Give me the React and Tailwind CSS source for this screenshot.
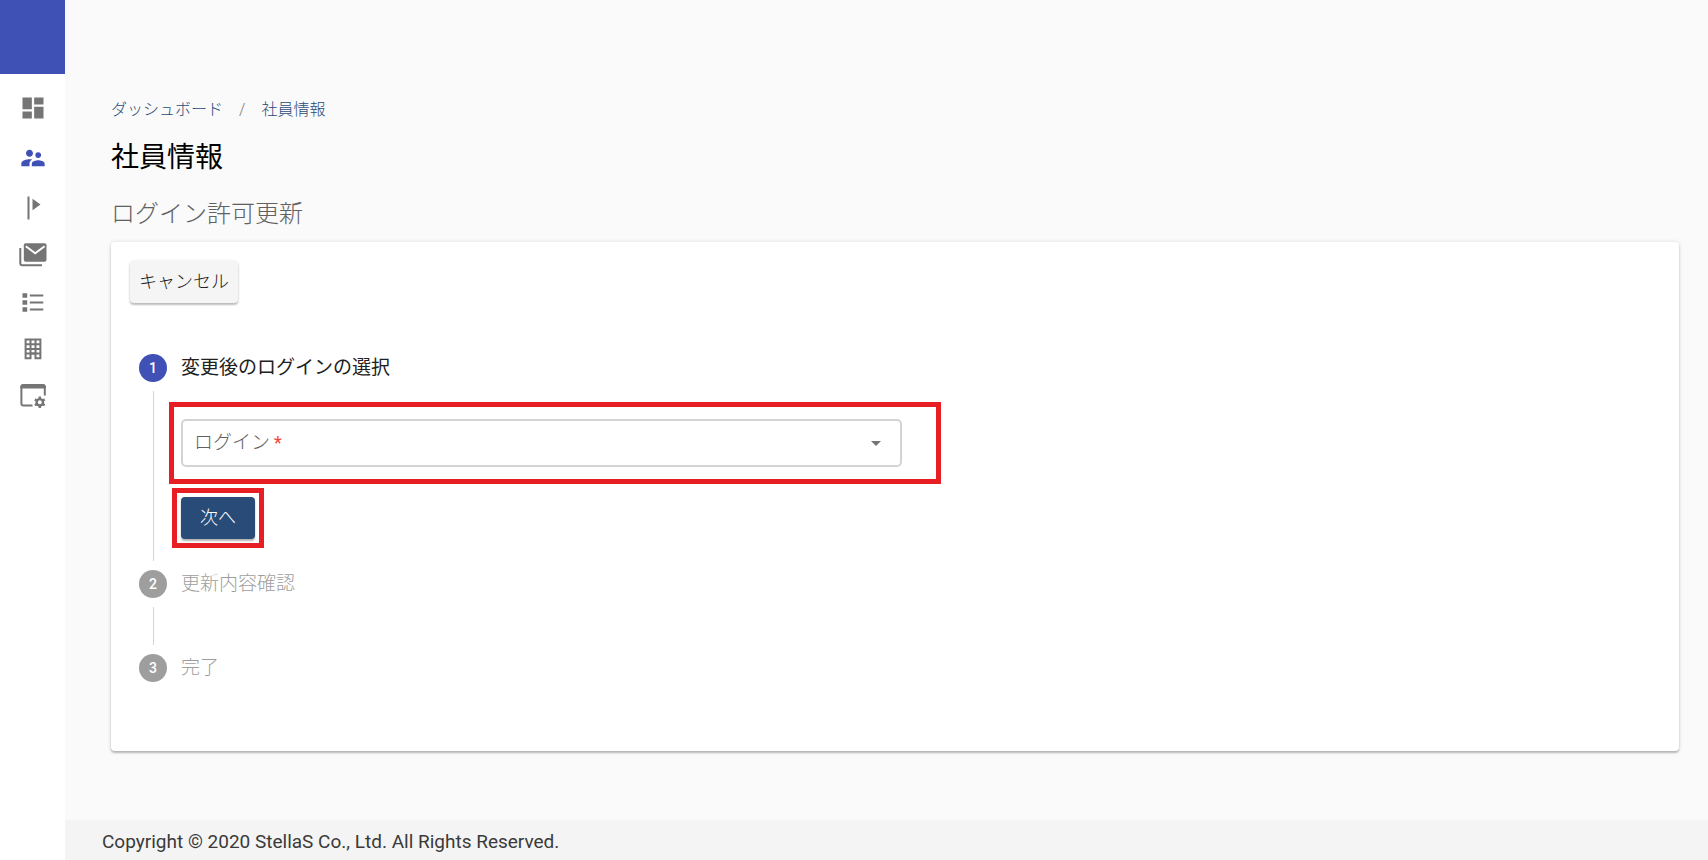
import { MdArrowDropDown, MdDashboard, MdSupervisorAccount } from 'react-icons/md'

function MilestoneIcon() {
  return (
    <svg viewBox="0 0 28 28" className="size-7" fill="currentColor">
      <rect x="8.5" y="2.5" width="2" height="23" />
      <path d="M13.5 4.8v11.4l8-5.7z" />
    </svg>
  )
}

function MailStackIcon() {
  return (
    <svg viewBox="0 0 28 28" className="size-7" fill="none">
      <rect x="4.8" y="2.3" width="22.7" height="18.4" rx="2" fill="currentColor" />
      <path d="M6.8 5.2l9.4 7 9.4-7" stroke="#fff" strokeWidth="2" />
      <path d="M1.3 7v15.3a2 2 0 0 0 2 2H23" stroke="currentColor" strokeWidth="2" />
    </svg>
  )
}

function ListIcon() {
  return (
    <svg viewBox="0 0 28 28" className="size-7" fill="currentColor">
      <path d="M3.5 5.2h4.7v4.6H3.5zM3.5 12.2h4.7v4.6H3.5zM3.5 19.2h4.7v4.6H3.5z" />
      <path d="M10.8 6.5h13.5v2H10.8zM10.8 13.5h13.5v2H10.8zM10.8 20.5h13.5v2H10.8z" />
    </svg>
  )
}

function BuildingIcon() {
  return (
    <svg viewBox="0 0 28 28" className="size-7" fill="none" stroke="currentColor" strokeWidth="2">
      <path d="M6.6 4.5h14.8v18.7h-4.9v-4.7h-5v4.7H6.6z" />
      <path d="M11.5 4.5v14M16.5 4.5v14M6.6 9.2h14.8M6.6 13.9h14.8M6.6 18.5h14.8" />
    </svg>
  )
}

function WindowSettingsIcon() {
  return (
    <svg viewBox="0 0 28 28" className="size-7" fill="none">
      <path d="M13.5 23.6H4.2a1.8 1.8 0 0 1-1.8-1.8V4" stroke="currentColor" strokeWidth="2" />
      <path d="M25.8 4v9.5" stroke="currentColor" strokeWidth="2" />
      <path d="M1.4 6.4V4.5A2.5 2.5 0 0 1 3.9 2h20.4a2.5 2.5 0 0 1 2.5 2.5v1.9z" fill="currentColor" />
      <circle cx="20.8" cy="20.3" r="3.2" stroke="currentColor" strokeWidth="2.4" />
      <path
        d="M20.8 14.6v2.6M20.8 23.4V26M15.9 17.4l2.2 1.3M23.5 21.9l2.2 1.3M15.9 23.2l2.2-1.3M23.5 18.7l2.2-1.3"
        stroke="currentColor"
        strokeWidth="2.4"
      />
    </svg>
  )
}

const navItems = [
  { label: 'ダッシュボード', icon: <MdDashboard className="size-7" />, spaced: true },
  { label: '社員情報', icon: <MdSupervisorAccount className="size-7" />, active: true, spaced: true },
  { label: 'マイルストーン', icon: <MilestoneIcon /> },
  { label: 'メール', icon: <MailStackIcon /> },
  { label: '一覧', icon: <ListIcon /> },
  { label: '会社', icon: <BuildingIcon /> },
  { label: '設定', icon: <WindowSettingsIcon /> },
]

function Sidebar() {
  return (
    <aside className="w-[65px] shrink-0 bg-white">
      <div className="h-[74px] bg-[#3f51b5]" />
      <nav className="flex flex-col items-center gap-[19px] pt-5">
        {navItems.map((item) => (
          <a
            key={item.label}
            href="#"
            aria-label={item.label}
            className={`${item.active ? 'text-[#3f51b5]' : 'text-[#757575]'} ${item.spaced ? 'mb-[3px]' : ''}`}
          >
            {item.icon}
          </a>
        ))}
      </nav>
    </aside>
  )
}

function Step({ number, title, active, last, children }) {
  return (
    <li className="flex gap-[14px]">
      <div className="flex w-7 shrink-0 flex-col items-center">
        <span
          className={`flex size-7 items-center justify-center rounded-full text-sm font-medium text-white ${
            active ? 'bg-[#3f51b5]' : 'bg-[#9e9e9e]'
          }`}
        >
          {number}
        </span>
        {!last && <span className="my-[9px] w-px flex-1 bg-[#d6d6d6]" />}
      </div>
      <div className="flex-1">
        <h3 className={`text-[19px] leading-7 ${active ? 'text-[#212121]' : 'font-light text-[#9e9e9e]'}`}>
          {title}
        </h3>
        {children}
      </div>
    </li>
  )
}

export default function App() {
  return (
    <div className="flex min-h-screen bg-[#fafafa] font-['Roboto','Noto_Sans_CJK_JP',sans-serif]">
      <Sidebar />

      <div className="flex min-w-0 flex-1 flex-col">
        <main className="flex-1 pt-[98px] pr-[29px] pb-16 pl-[46px]">
          {/* Breadcrumb */}
          <nav className="flex gap-4 text-base leading-6 font-light text-[#284b78]">
            <a href="#">ダッシュボード</a>
            <span className="text-[#757575]">/</span>
            <a href="#">社員情報</a>
          </nav>

          <h1 className="mt-4 text-[28px] leading-10 text-black">社員情報</h1>
          <h2 className="mt-4 text-2xl leading-10 font-light text-[#616161]">ログイン許可更新</h2>

          <section className="mt-2 rounded bg-white px-[19px] pt-[19px] pb-[69px] shadow-[0_2px_2px_rgba(0,0,0,0.24),0_0_4px_rgba(0,0,0,0.12)]">
            <button
              type="button"
              className="h-[42px] rounded bg-[#f5f5f5] px-[9px] text-lg font-light text-[#212121] shadow-[0_2px_2px_rgba(0,0,0,0.24),0_0_3px_rgba(0,0,0,0.1)]"
            >
              キャンセル
            </button>

            <ol className="mt-[51px] px-[9px]">
              <Step number={1} title="変更後のログインの選択" active>
                <div className="mt-5 -ml-3 w-[772px] max-w-full border-5 border-[#e81e25] py-3 pr-[34px] pl-[7px]">
                  <div className="relative">
                    <select
                      id="login"
                      required
                      defaultValue=""
                      className="block h-12 w-full appearance-none rounded-[5px] border-2 border-[#d3d3d3] bg-white px-3 text-[19px]"
                    >
                      <option value="" />
                    </select>
                    <label
                      htmlFor="login"
                      className="pointer-events-none absolute inset-y-0 left-[13px] flex items-center gap-1 text-[19px] font-light text-[#616161]"
                    >
                      ログイン<span className="text-lg font-normal text-[#f44336]">*</span>
                    </label>
                    <MdArrowDropDown className="pointer-events-none absolute top-3 right-[14px] size-6 text-[#757575]" />
                  </div>
                </div>
                <div className="mt-1 mb-[22px] -ml-[9px] w-fit border-5 border-[#e81e25] p-1">
                  <button
                    type="button"
                    className="block h-[42px] rounded bg-[#284b78] px-[19px] text-lg font-light text-white shadow-[0_2px_2px_rgba(0,0,0,0.3)]"
                  >
                    次へ
                  </button>
                </div>
              </Step>
              <Step number={2} title="更新内容確認">
                <div className="h-14" />
              </Step>
              <Step number={3} title="完了" last />
            </ol>
          </section>
        </main>

        <footer className="flex h-10 items-center bg-[#f4f4f4] px-[37px] pt-1 text-[19px] text-[#3a3a3a]">
          Copyright © 2020 StellaS Co., Ltd. All Rights Reserved.
        </footer>
      </div>
    </div>
  )
}
